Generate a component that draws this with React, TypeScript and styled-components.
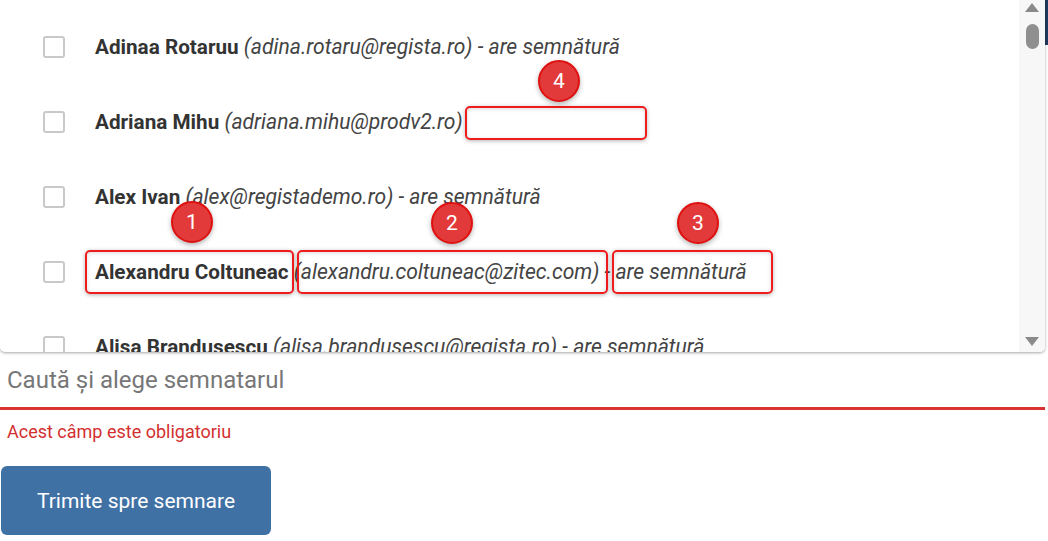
import React from "react";
import styled, { createGlobalStyle } from "styled-components";

const GlobalStyle = createGlobalStyle`
  body {
    margin: 0;
    background: #fff;
    font-family: Roboto, "Liberation Sans", sans-serif;
  }
`;

const Page = styled.div`
  width: 1045px;
  position: relative;
`;

const EdgeStrip = styled.div`
  position: absolute;
  left: 1045px;
  top: 0;
  width: 3px;
  height: 45px;
  background: #1f3a5f;
`;

const ListPanel = styled.div`
  position: relative;
  height: 352px;
  display: flex;
  background: #fff;
  border-radius: 0 0 5px 5px;
  box-shadow: 0 1px 3px rgba(0, 0, 0, 0.35);
  overflow: hidden;
`;

const List = styled.div`
  flex: 1;
  padding-top: 9px;
`;

const Row = styled.div`
  height: 75px;
  display: flex;
  align-items: center;
  padding-left: 43px;
  font-size: 20.7px;
  color: #333;
  white-space: nowrap;
`;

const Checkbox = styled.span`
  width: 18px;
  height: 18px;
  border: 2px solid #c9c9c9;
  border-radius: 3px;
  margin-right: 30px;
  flex-shrink: 0;
`;

const Name = styled.b`
  font-weight: 700;
  color: #333;
`;

const Detail = styled.i`
  font-size: 21.1px;
  color: #444;
  white-space: pre;
`;

const Scrollbar = styled.div`
  width: 26px;
  background: #f7f7f7;
  display: flex;
  flex-direction: column;
  align-items: center;
  padding: 3px 0;
`;

const Arrow = styled.span<{ $down?: boolean }>`
  width: 0;
  height: 0;
  border-left: 7px solid transparent;
  border-right: 7px solid transparent;
  ${(p) =>
    p.$down
      ? "border-top: 9px solid #8a8a8a; margin-top: auto; margin-bottom: 3px;"
      : "border-bottom: 9px solid #8a8a8a;"}
`;

const Thumb = styled.span`
  width: 13px;
  height: 25px;
  margin-top: 12px;
  border-radius: 7px;
  background: #8f8f8f;
`;

const Mark = styled.span<{ $x: number; $y: number; $w: number; $h: number }>`
  position: absolute;
  left: ${(p) => p.$x}px;
  top: ${(p) => p.$y}px;
  width: ${(p) => p.$w}px;
  height: ${(p) => p.$h}px;
  box-sizing: border-box;
  border: 2px solid #ee1c1c;
  border-radius: 5px;
  box-shadow: 0 1px 4px rgba(0, 0, 0, 0.3), inset 0 1px 4px rgba(0, 0, 0, 0.15);
`;

const Badge = styled.span<{ $x: number; $y: number }>`
  position: absolute;
  left: ${(p) => p.$x - 21}px;
  top: ${(p) => p.$y - 21}px;
  width: 42px;
  height: 42px;
  box-sizing: border-box;
  border-radius: 50%;
  border: 2px solid #e01010;
  background: #e23a3a;
  color: #fff;
  font-size: 21px;
  display: flex;
  align-items: center;
  justify-content: center;
  box-shadow: 0 2px 5px rgba(0, 0, 0, 0.3);
`;

const SearchField = styled.div`
  height: 55px;
  display: flex;
  align-items: center;
  padding-left: 7px;
  font-size: 24px;
  color: #777;
  border-bottom: 3px solid #d83232;
`;

const ErrorText = styled.div`
  margin-top: 12px;
  padding-left: 7px;
  font-size: 18px;
  line-height: 20px;
  color: #d32f2f;
`;

const SubmitButton = styled.button`
  margin-top: 24px;
  margin-left: 1px;
  width: 270px;
  height: 69px;
  border: none;
  border-radius: 6px;
  background: #3f71a4;
  color: #fff;
  font-family: Roboto, "Liberation Sans", sans-serif;
  font-size: 21px;
`;

const people = [
  { name: "Adinaa Rotaruu", email: "adina.rotaru@regista.ro", signed: true },
  { name: "Adriana Mihu", email: "adriana.mihu@prodv2.ro", signed: false },
  { name: "Alex Ivan", email: "alex@registademo.ro", signed: true },
  { name: "Alexandru Coltuneac", email: "alexandru.coltuneac@zitec.com", signed: true },
  { name: "Alisa Brandusescu", email: "alisa.brandusescu@regista.ro", signed: true },
];

const marks = [
  { x: 85, y: 250, w: 209, h: 44 },
  { x: 297, y: 250, w: 311, h: 44 },
  { x: 612, y: 250, w: 161, h: 44 },
  { x: 465, y: 106, w: 182, h: 34 },
];

const badges = [
  { n: 1, x: 192, y: 222 },
  { n: 2, x: 452, y: 223 },
  { n: 3, x: 698, y: 223 },
  { n: 4, x: 559, y: 81 },
];

const App = () => {
  return (
    <>
      <GlobalStyle />
      <Page>
        <EdgeStrip />
        <ListPanel>
          <List>
            {people.map((p) => (
              <Row key={p.name}>
                <Checkbox />
                <Name>{p.name}</Name>
                <Detail>
                  {" (" + p.email + ")"}
                  {p.signed ? " - are semnătură" : ""}
                </Detail>
              </Row>
            ))}
          </List>
          <Scrollbar>
            <Arrow />
            <Thumb />
            <Arrow $down />
          </Scrollbar>
          {marks.map((m, i) => (
            <Mark key={i} $x={m.x} $y={m.y} $w={m.w} $h={m.h} />
          ))}
          {badges.map((b) => (
            <Badge key={b.n} $x={b.x} $y={b.y}>
              {b.n}
            </Badge>
          ))}
        </ListPanel>
        <SearchField>Caută și alege semnatarul</SearchField>
        <ErrorText>Acest câmp este obligatoriu</ErrorText>
        <SubmitButton>Trimite spre semnare</SubmitButton>
      </Page>
    </>
  );
};

export default App;
